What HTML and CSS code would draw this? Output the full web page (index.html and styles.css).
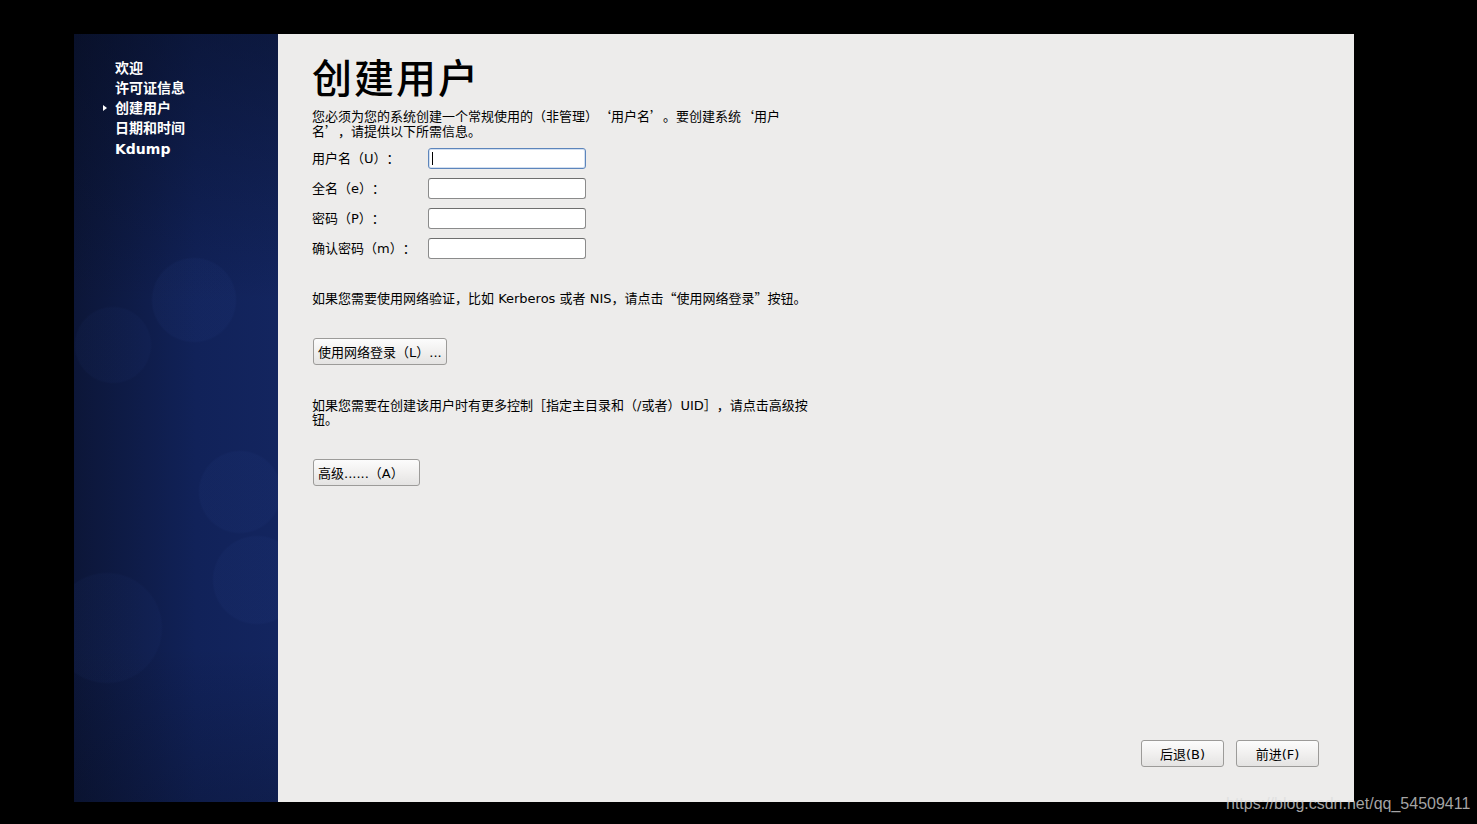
FILE: index.html
```html
<!DOCTYPE html>
<html lang="zh">
<head>
<meta charset="utf-8">
<title>创建用户</title>
<link rel="stylesheet" href="styles.css">
</head>
<body>
<div class="desktop">
  <div class="screen">
    <aside class="sidebar">
      <ul class="steps">
        <li>欢迎</li>
        <li>许可证信息</li>
        <li class="current">创建用户</li>
        <li>日期和时间</li>
        <li class="latin">Kdump</li>
      </ul>
    </aside>
    <main class="main">
      <h1 class="title">创建用户</h1>
      <p class="intro">您必须为您的系统创建一个常规使用的（非管理）<span class="cjk">‘</span>用户名<span class="cjk">’</span>。要创建系统<span class="cjk">‘</span>用户名<span class="cjk">’</span>，请提供以下所需信息。</p>
      <div class="form">
        <label class="label">用户名（U）：</label>
        <div class="field focused"><span class="caret"></span></div>
        <label class="label">全名（e）：</label>
        <div class="field"></div>
        <label class="label">密码（P）：</label>
        <div class="field"></div>
        <label class="label">确认密码（m）：</label>
        <div class="field"></div>
      </div>
      <p class="hint net">如果您需要使用网络验证，比如 Kerberos 或者 NIS，请点击<span class="cjk">“</span>使用网络登录<span class="cjk">”</span>按钮。</p>
      <button class="btn net-btn">使用网络登录（L）...</button>
      <p class="hint adv">如果您需要在创建该用户时有更多控制［指定主目录和（/或者）UID］，请点击高级按钮。</p>
      <button class="btn adv-btn">高级......（A）</button>
      <div class="nav">
        <button class="btn nav-btn">后退(B)</button>
        <button class="btn nav-btn">前进(F)</button>
      </div>
    </main>
  </div>
  <div class="watermark">https://blog.csdn.net/qq_54509411</div>
</div>
</body>
</html>
```
FILE: styles.css
```css
html, body {
  margin: 0;
  padding: 0;
  background: #000;
}
body {
  width: 1477px;
  height: 824px;
  overflow: hidden;
  font-family: "DejaVu Sans", "Noto Sans CJK SC", sans-serif;
  text-spacing-trim: space-all;
}
.desktop {
  position: relative;
  padding: 34px 0 0 74px;
  height: 790px;
}
.screen {
  display: flex;
  width: 1280px;
  height: 768px;
}
.sidebar {
  width: 204px;
  flex: none;
  background:
    radial-gradient(circle at 120px 266px, rgba(50, 80, 160, 0.08) 0 41px, rgba(50, 80, 160, 0) 43px),
    radial-gradient(circle at 39px 311px, rgba(50, 80, 160, 0.06) 0 37px, rgba(50, 80, 160, 0) 39px),
    radial-gradient(circle at 166px 458px, rgba(50, 80, 160, 0.08) 0 40px, rgba(50, 80, 160, 0) 42px),
    radial-gradient(circle at 183px 546px, rgba(50, 80, 160, 0.08) 0 43px, rgba(50, 80, 160, 0) 45px),
    radial-gradient(circle at 33px 594px, rgba(50, 80, 160, 0.06) 0 54px, rgba(50, 80, 160, 0) 56px),
    linear-gradient(to bottom, rgba(5, 10, 25, 0.45), rgba(5, 10, 25, 0) 35%, rgba(5, 10, 25, 0) 80%, rgba(5, 10, 25, 0.25)),
    linear-gradient(to right, #0c1638, #112259 60%, #13255f);
}
.steps {
  list-style: none;
  margin: 0;
  padding: 24px 0 0 41px;
}
.steps li {
  position: relative;
  color: #fff;
  font-weight: bold;
  font-size: 14px;
  line-height: 20px;
  height: 20px;
}
.steps li.latin {
  font-size: 14px;
  line-height: 22px;
}
.steps li.current::before {
  content: "";
  position: absolute;
  left: -12px;
  top: 7px;
  border-left: 4px solid #fff;
  border-top: 3px solid transparent;
  border-bottom: 3px solid transparent;
}
.main {
  flex: 1;
  background: #edeceb;
  display: flex;
  flex-direction: column;
  align-items: flex-start;
  padding: 0 35px 35px 34px;
  color: #000;
}
.title {
  margin: 16px 0 0 0;
  font-family: "Noto Sans CJK SC", sans-serif;
  font-weight: 500;
  font-size: 40px;
  line-height: 52px;
  letter-spacing: 2px;
}
.cjk {
  font-family: "Noto Sans CJK SC", sans-serif;
}
.intro, .hint {
  margin: 0;
  font-size: 13px;
  line-height: 14px;
}
.intro {
  margin-top: 7px;
  width: 475px;
}
.form {
  display: grid;
  grid-template-columns: 116px 158px;
  grid-auto-rows: 21px;
  row-gap: 9px;
  align-items: center;
  margin-top: 9px;
}
.label {
  font-size: 13px;
  line-height: 14px;
}
.field {
  box-sizing: border-box;
  height: 21px;
  background: #fff;
  border: 1px solid #8b8b8b;
  border-top-color: #6e6e6e;
  border-radius: 3px;
  position: relative;
}
.field.focused {
  border-color: #5d85bb;
  box-shadow: inset 0 0 0 1px rgba(130, 165, 215, 0.35);
}
.caret {
  position: absolute;
  left: 3px;
  top: 3px;
  width: 1px;
  height: 13px;
  background: #000;
}
.hint.net {
  margin-top: 32px;
}
.btn {
  box-sizing: border-box;
  font-family: "DejaVu Sans", "Noto Sans CJK SC", sans-serif;
  font-size: 13px;
  color: #000;
  background: linear-gradient(to bottom, #fcfcfc, #f1f0ef 50%, #e4e3e2);
  border: 1px solid #9c9b99;
  border-radius: 3px;
  padding: 0 4px;
  height: 27px;
  margin: 0;
  white-space: nowrap;
  text-spacing-trim: space-all;
}
.net-btn {
  margin-top: 32px;
  margin-left: 1px;
  width: 134px;
  text-align: left;
}
.hint.adv {
  margin-top: 34px;
  width: 505px;
}
.adv-btn {
  margin-top: 32px;
  margin-left: 1px;
  width: 107px;
  text-align: left;
}
.nav {
  margin-top: auto;
  align-self: flex-end;
  display: flex;
  gap: 12px;
}
.nav-btn {
  width: 83px;
  text-align: center;
}
.watermark {
  position: absolute;
  left: 1226px;
  top: 794px;
  font-family: "Liberation Sans", Arial, sans-serif;
  font-size: 16px;
  line-height: 20px;
  color: rgba(220, 220, 220, 0.75);
}
```
